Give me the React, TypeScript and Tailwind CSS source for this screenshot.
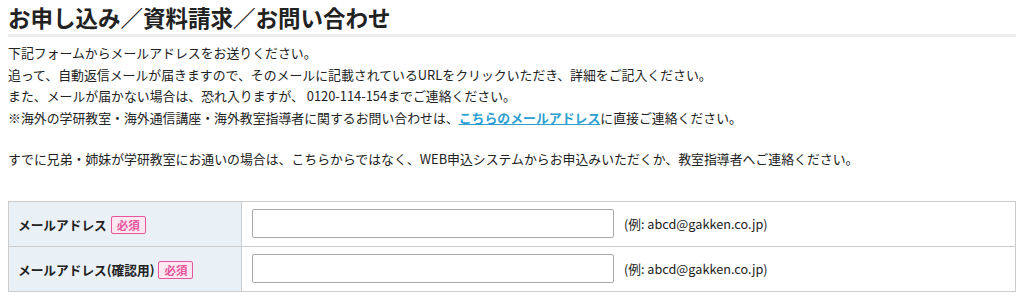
export default function App() {
    const rows = ["メールアドレス", "メールアドレス(確認用)"]

    return (
        <div className="bg-white px-2 text-[#222] font-['Noto_Sans_CJK_JP','Noto_Sans',sans-serif]">
            <h2 className="pt-[2px] pb-[1px] text-[22.5px] leading-[31px] font-bold border-b-[3px] border-[#eeeeee]">
                お申し込み／資料請求／お問い合わせ
            </h2>
            <p className="mt-[5px] text-[12.88px] leading-[21.6px]">
                下記フォームからメールアドレスをお送りください。<br/>
                追って、自動返信メールが届きますので、そのメールに記載されているURLをクリックいただき、詳細をご記入ください。<br/>
                また、メールが届かない場合は、恐れ入りますが、 0120-114-154までご連絡ください。<br/>
                ※海外の学研教室・海外通信講座・海外教室指導者に関するお問い合わせは、
                <a href="#" className="font-bold text-[#2b9fd1] underline">こちらのメールアドレス</a>
                に直接ご連絡ください。
            </p>
            <p className="mt-[19.6px] text-[12.88px] leading-[21.6px]">
                すでに兄弟・姉妹が学研教室にお通いの場合は、こちらからではなく、WEB申込システムからお申込みいただくか、教室指導者へご連絡ください。
            </p>
            <table className="mt-[31px] w-[1008px] border-collapse text-[12.7px]">
                <tbody>
                {rows.map((label) => (
                    <tr key={label} className="h-[45px]">
                        <th className="w-[233px] border border-[#cccccc] bg-[#e9f1f7] pl-[9px] text-left font-bold">
                            <span className="align-middle">{label}</span>
                            <span className="ml-[4px] inline-block rounded-[2px] border border-[#e8559b] bg-[#fde8f2] px-[5px] text-[11.5px] leading-[16px] font-bold text-[#e8559b] align-middle">
                                必須
                            </span>
                        </th>
                        <td className="border border-[#cccccc] pl-[10px]">
                            <div className="flex items-center gap-[10px]">
                                <input type="text" className="h-[29px] w-[362px] rounded-[2px] border border-[#aaaaaa] bg-white px-2"/>
                                <span>(例: abcd@gakken.co.jp)</span>
                            </div>
                        </td>
                    </tr>
                ))}
                </tbody>
            </table>
        </div>
    )
}
